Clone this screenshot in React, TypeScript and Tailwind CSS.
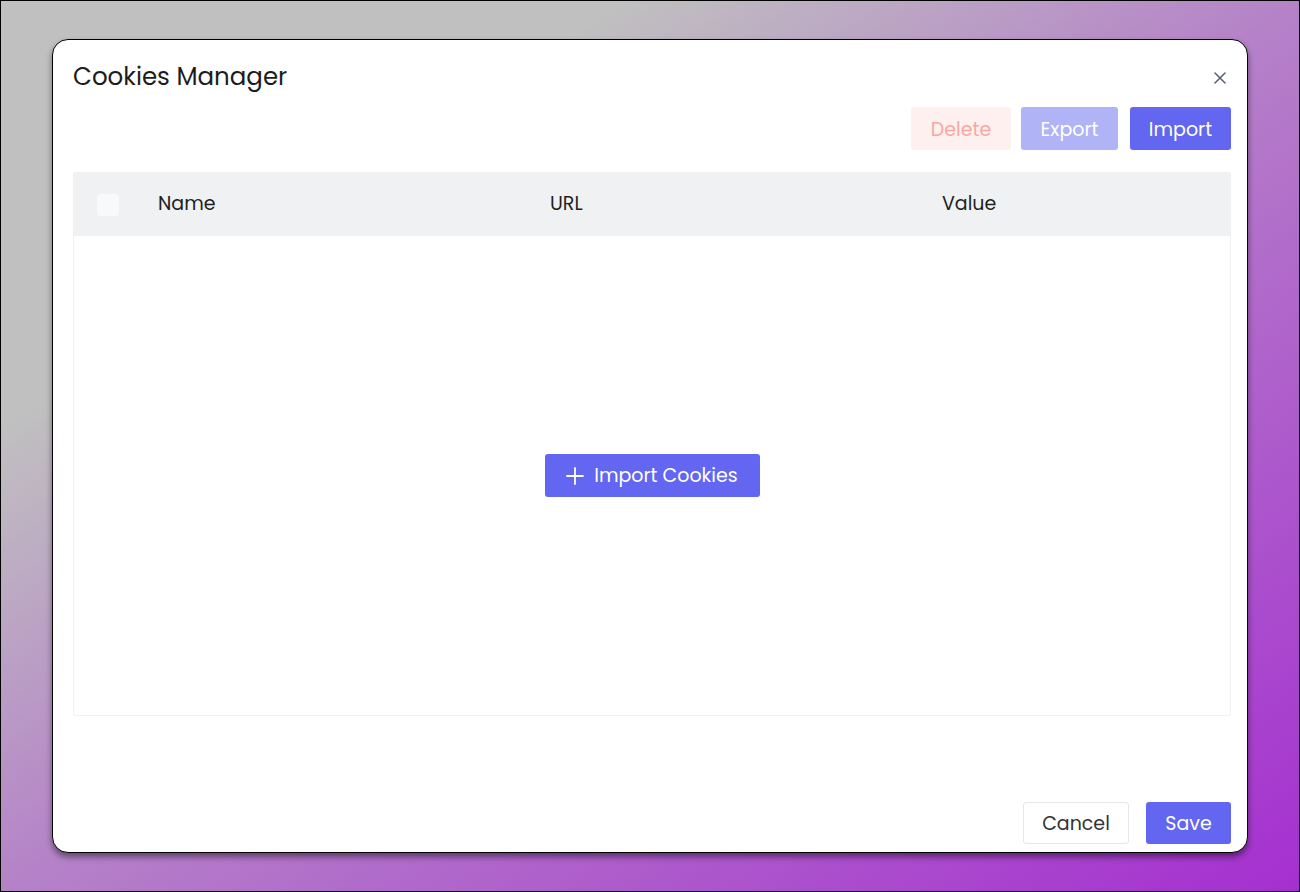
import React from "react";

export default function App() {
  const font = { fontFamily: "Poppins, 'Noto Sans', sans-serif" };
  return (
    <div
      className="w-[1300px] h-[892px] border border-black bg-[linear-gradient(to_bottom_right,#c0c0c0_0%,#c0c0c0_24%,#b582c8_50%,#a52fd0_100%)] pt-[38px] pl-[51px] box-border"
      style={font}
    >
      <div className="w-[1196px] h-[814px] bg-white border border-black rounded-[16px] shadow-[0_4px_6px_rgba(0,0,0,0.45)] flex flex-col pl-[20px] pr-[16px]">
        <div className="flex items-center justify-between h-[66px] pt-[9px]">
          <div className="text-[24.5px] text-[#1c1c1c] leading-none">Cookies Manager</div>
          <button className="w-[20px] h-[20px] flex items-center justify-center text-[#5b6272] mr-[1px]">
            <svg width="12" height="12" viewBox="0 0 12 12" fill="none" stroke="currentColor" strokeWidth="1.6" strokeLinecap="round">
              <path d="M1 1L11 11M11 1L1 11" />
            </svg>
          </button>
        </div>
        <div className="flex justify-end gap-[10px] mt-[1px]">
          <button className="w-[100px] h-[43px] pt-[3px] rounded-[3px] bg-[#fef0ef] text-[#f5a9a2] text-[19px]">Delete</button>
          <button className="w-[97px] h-[43px] pt-[3px] rounded-[3px] bg-[#b0b3f6] text-white text-[19px]">Export</button>
          <button className="w-[101px] h-[43px] pt-[3px] rounded-[3px] bg-[#6366f0] text-white text-[19px] ml-[2px]">Import</button>
        </div>
        <div className="mt-[22px] h-[544px] border border-[#f0f0f2] rounded-[2px] flex flex-col">
          <div className="h-[63px] bg-[#f0f1f3] flex items-center text-[19px] text-[#1f1f1f]">
            <div className="w-[22px] h-[22px] rounded-[4px] bg-[#f8f9fb] ml-[23px]" />
            <div className="ml-[39px] w-[392px]">Name</div>
            <div className="w-[392px]">URL</div>
            <div>Value</div>
          </div>
          <div className="flex-1 flex items-center justify-center">
            <button className="w-[215px] h-[43px] pt-[2px] rounded-[3px] bg-[#6366f0] text-white text-[19px] flex items-center justify-center gap-[10px]">
              <svg width="18" height="18" viewBox="0 0 18 18" fill="none" stroke="currentColor" strokeWidth="1.8" strokeLinecap="round" className="-mt-[2px]">
                <path d="M9 1V17M1 9H17" />
              </svg>
              <span>Import Cookies</span>
            </button>
          </div>
        </div>
        <div className="flex-1" />
        <div className="flex justify-end gap-[17px] mb-[8px]">
          <button className="w-[106px] h-[42px] pt-[3px] rounded-[3px] border border-[#e6e6e6] bg-white text-[#333] text-[19px]">Cancel</button>
          <button className="w-[85px] h-[42px] pt-[3px] rounded-[3px] bg-[#6366f0] text-white text-[19px]">Save</button>
        </div>
      </div>
    </div>
  );
}
